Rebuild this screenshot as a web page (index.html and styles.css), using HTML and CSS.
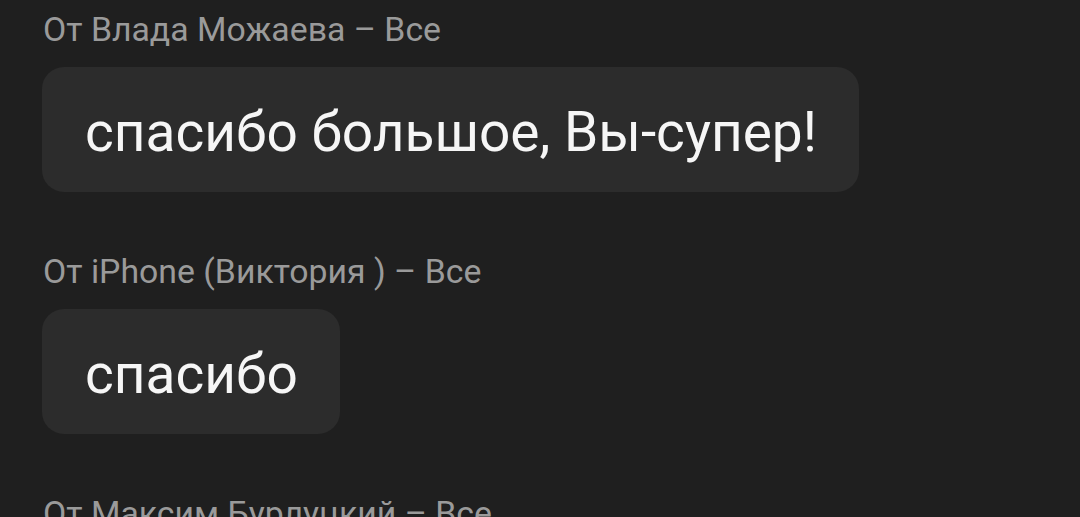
FILE: index.html
```html
<!DOCTYPE html>
<html lang="ru">
<head>
<meta charset="utf-8">
<link rel="stylesheet" href="styles.css">
</head>
<body>
<div class="feed">
  <div class="item">
    <div class="from">От Влада Можаева – Все</div>
    <div class="bubble">спасибо большое, Вы-супер!</div>
  </div>
  <div class="item">
    <div class="from">От iPhone (Виктория ) – Все</div>
    <div class="bubble">спасибо</div>
  </div>
  <div class="item">
    <div class="from">От Максим Бурлуцкий – Все</div>
  </div>
</div>
</body>
</html>
```
FILE: styles.css
```css
html, body {
  margin: 0;
  padding: 0;
  background: #1f1f1f;
  height: 100%;
  overflow: hidden;
}
.feed {
  display: flex;
  flex-direction: column;
  gap: 58px;
  padding: 8px 0 0 42px;
  font-family: Roboto, "Liberation Sans", sans-serif;
}
.item {
  display: flex;
  flex-direction: column;
  align-items: flex-start;
  gap: 15px;
}
.from {
  color: #9a9a9a;
  font-size: 33.8px;
  line-height: 44px;
  padding-left: 1px;
}
.bubble {
  background: #2c2c2c;
  color: #f6f6f6;
  font-size: 55px;
  height: 125px;
  line-height: 119px;
  padding: 6px 42px 0 43px;
  border-radius: 22px;
  box-sizing: border-box;
}
```
